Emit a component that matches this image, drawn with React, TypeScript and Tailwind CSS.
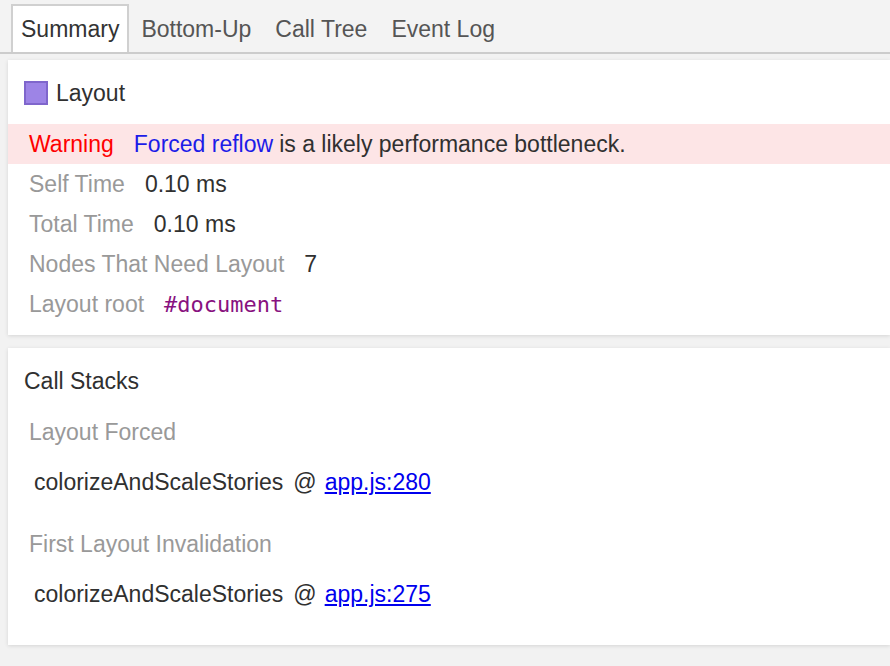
import type { ReactNode } from "react";

const tabs = ["Summary", "Bottom-Up", "Call Tree", "Event Log"];

const details: { label: string; value: ReactNode }[] = [
  { label: "Self Time", value: "0.10 ms" },
  { label: "Total Time", value: "0.10 ms" },
  { label: "Nodes That Need Layout", value: "7" },
  {
    label: "Layout root",
    value: (
      <span className="font-['DejaVu_Sans_Mono','Liberation_Mono',monospace] text-[22px] text-[#881280]">
        #document
      </span>
    ),
  },
];

const stacks = [
  { title: "Layout Forced", fn: "colorizeAndScaleStories", loc: "app.js:280" },
  { title: "First Layout Invalidation", fn: "colorizeAndScaleStories", loc: "app.js:275" },
];

function StackSection({ title, fn, loc, first }: { title: string; fn: string; loc: string; first: boolean }) {
  return (
    <div className={first ? "mt-[11px]" : "mt-[22px]"}>
      <div className="flex h-[40px] items-center pl-[21px] text-[#999]">{title}</div>
      <div className="mt-[10px] flex h-[40px] items-center pl-[26px] text-[#303030]">
        <span>{fn}</span>
        <span className="ml-[10px] mr-[8px]">@</span>
        <a href="#" className="text-[#0000ee] underline">
          {loc}
        </a>
      </div>
    </div>
  );
}

export default function App() {
  return (
    <div className="min-h-[666px] bg-[#f2f2f2] font-['Liberation_Sans',Arial,sans-serif] text-[23px]">
      <div className="flex h-[54px] border-b-2 border-[#cccccc] bg-[#f3f3f3] pl-[11px] pt-[4px]">
        {tabs.map((tab, i) => (
          <div
            key={tab}
            className={`flex items-center border-2 border-b-0 px-[8px] ${
              i === 0 ? "border-[#d0d0d0] bg-white text-[#333]" : "border-transparent px-[10px] text-[#555]"
            }`}
          >
            {tab}
          </div>
        ))}
      </div>

      <div className="pl-2 pt-[6px]">
        <section className="bg-white pb-[11px] pt-[13px] shadow-[0_1px_4px_rgba(0,0,0,0.12)]">
          <div className="flex h-[40px] items-center gap-[8px] pl-[16px] text-[#303030]">
            <span className="h-[24px] w-[24px] border-2 border-[#7f66cc] bg-[#9d84e6]" />
            <span>Layout</span>
          </div>
          <div className="mt-[11px] flex h-[40px] items-center bg-[#fde5e6] pl-[21px] text-[#303030]">
            <span className="mr-[20px] text-[#ff0000]">Warning</span>
            <span className="mr-[6px] text-[#1c1ce8]">Forced reflow</span>
            <span>is a likely performance bottleneck.</span>
          </div>
          {details.map((d) => (
            <div key={d.label} className="flex h-[40px] items-center pl-[21px]">
              <span className="mr-[20px] text-[#999]">{d.label}</span>
              <span className="text-[#303030]">{d.value}</span>
            </div>
          ))}
        </section>

        <section className="mt-[13px] bg-white pb-[31px] pt-[13px] shadow-[0_1px_4px_rgba(0,0,0,0.12)]">
          <div className="flex h-[40px] items-center pl-[16px] text-[#303030]">Call Stacks</div>
          {stacks.map((s, i) => (
            <StackSection key={s.title} {...s} first={i === 0} />
          ))}
        </section>
      </div>
    </div>
  );
}
